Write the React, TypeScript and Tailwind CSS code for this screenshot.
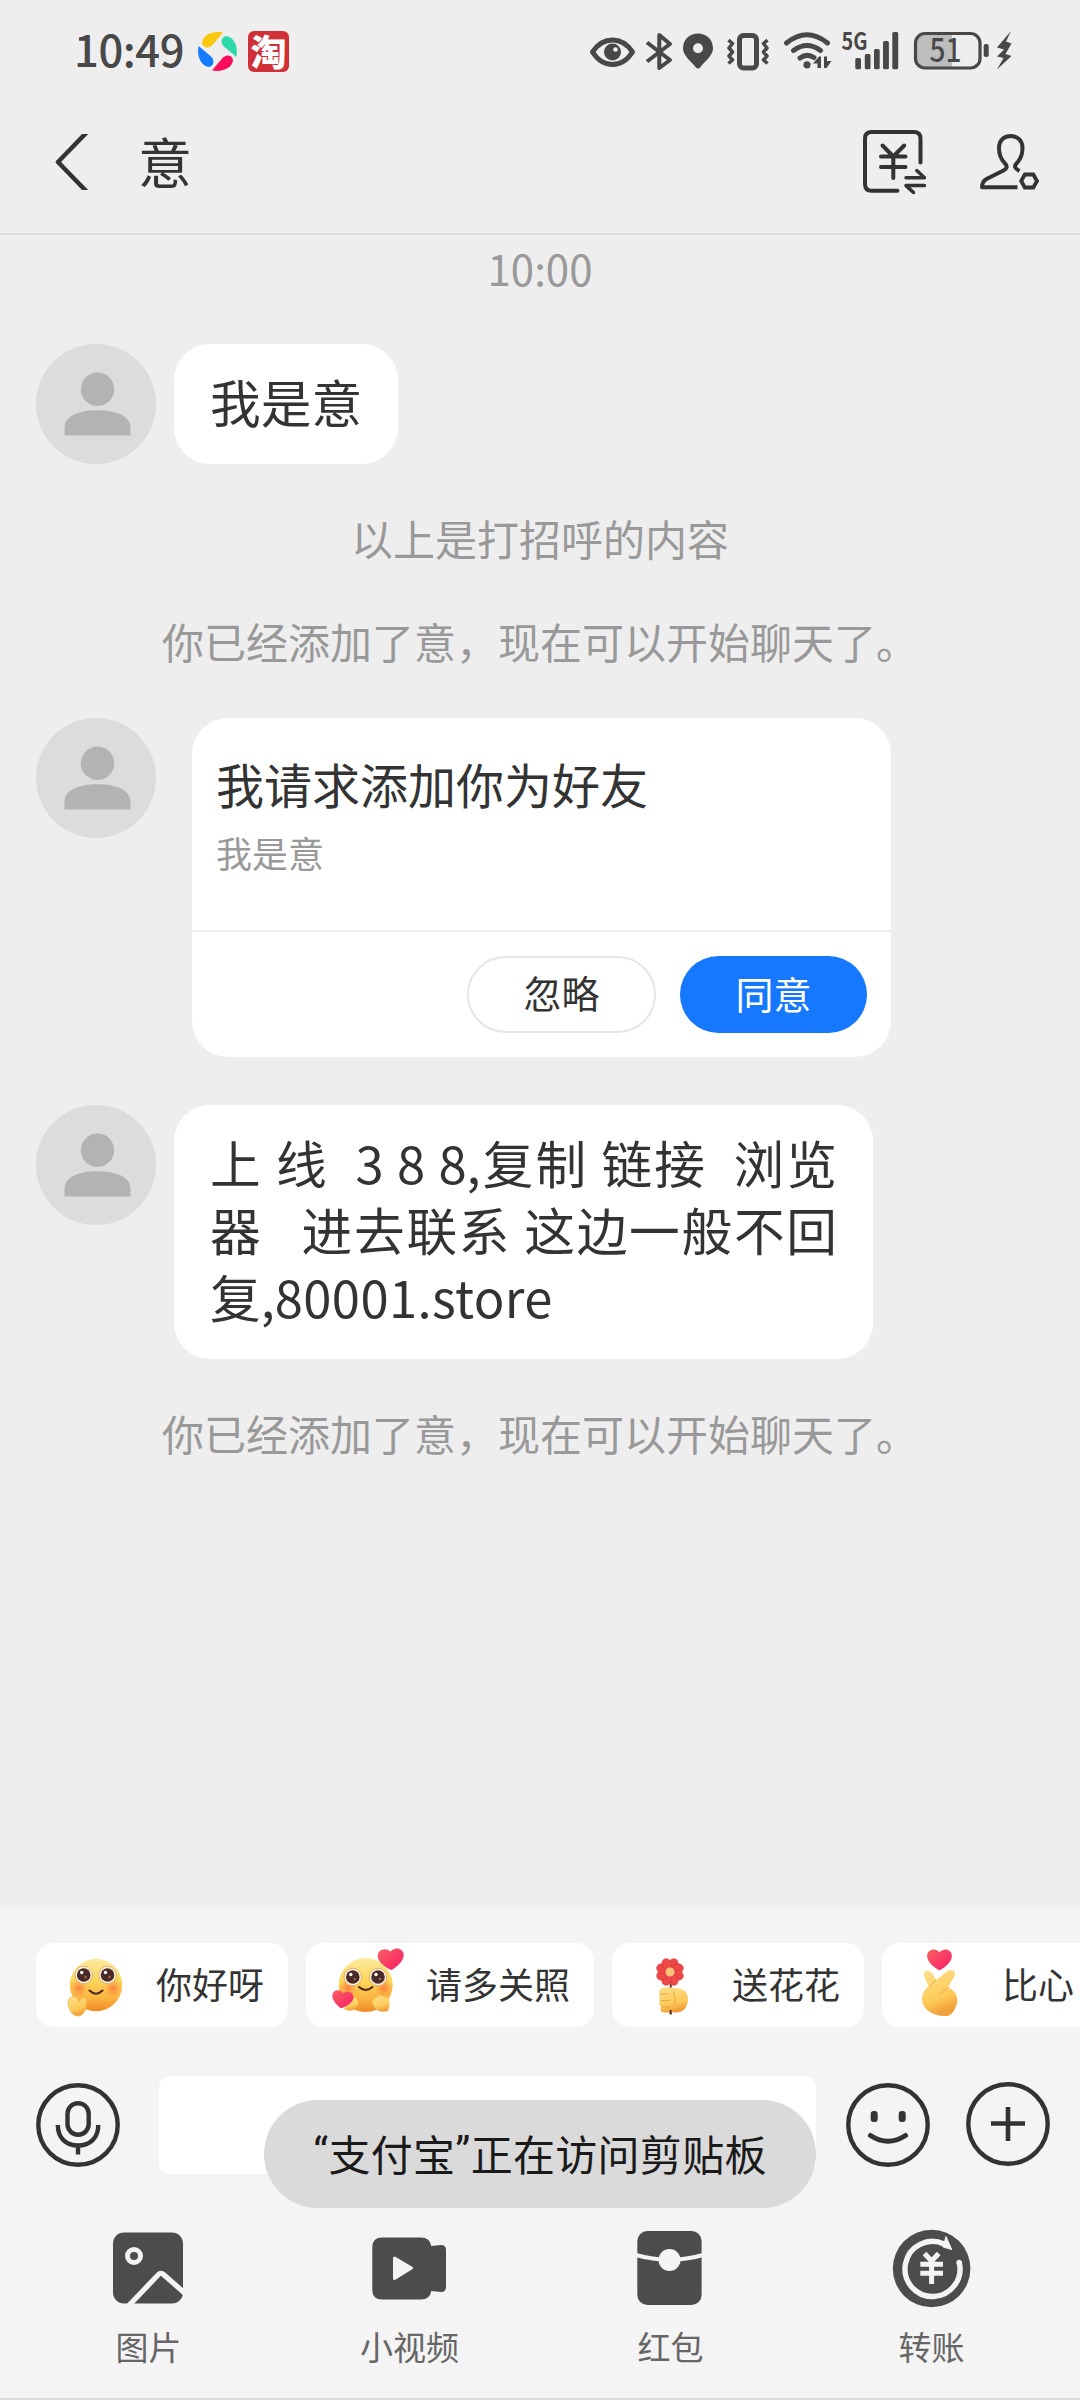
import type { ReactNode } from "react";

type ArtProps = { box: [number, number, number, number]; className?: string; children: ReactNode };

/* Icon canvas: box is [x, y, width, height] in screen units, drawn at 1:1. */
function Art({ box, className = "", children }: ArtProps) {
  return (
    <svg
      width={box[2]}
      height={box[3]}
      viewBox={box.join(" ")}
      fill="none"
      className={`block shrink-0 ${className}`}
    >
      {children}
    </svg>
  );
}

const PETAL = "M223 32.6C212 30.5 202.5 35.5 202 43C203 48.5 209.5 48.5 212.5 45Z";

function StatusBar() {
  return (
    <header className="flex h-24 items-start text-[#484848]">
      <div className="mt-[23px] ml-[74px] w-[113px] text-[43.5px] leading-[52px] font-medium tracking-[-0.4px]">10:49</div>
      <Art box={[197, 31, 41, 41]} className="mt-[31px] ml-[10px]">
        <path d={PETAL} fill="#fdc810" />
        <path d={PETAL} fill="#2ed8a8" transform="rotate(90 217.5 51.5)" />
        <path d={PETAL} fill="#fb0c5c" transform="rotate(180 217.5 51.5)" />
        <path d={PETAL} fill="#137cff" transform="rotate(270 217.5 51.5)" />
      </Art>
      <div className="mt-[31px] ml-[10px] flex size-[41px] items-center justify-center rounded-[6px] bg-[#d03038] text-[36px] leading-[36px] font-black text-white">
        <span className="-mt-[3px]">淘</span>
      </div>
      <div className="ml-auto flex pr-[68px]">
        <Art box={[589, 30, 48, 42]} className="mt-[30px]">
          <path
            d="M592.5 52Q600.5 40 612.5 40Q624.5 40 632.5 52Q624.5 64.5 612.5 64.5Q600.5 64.5 592.5 52Z"
            stroke="currentColor"
            strokeWidth="5"
            strokeLinejoin="round"
          />
          <circle cx="612.5" cy="52" r="8.5" fill="currentColor" />
          <circle cx="615.5" cy="49.5" r="2.3" fill="#eee" />
        </Art>
        <Art box={[645, 30, 29, 42]} className="mt-[30px] ml-2">
          <path d="M647 42.5L670 60L659.3 68V35L670 44L647 61.5" stroke="currentColor" strokeWidth="4" strokeLinejoin="round" />
        </Art>
        <Art box={[681, 30, 34, 42]} className="mt-[30px] ml-[7px]">
          <path
            d="M698 33.5C689 33.5 683 40 683 48.5C683 56 692 62 695.5 67Q698 70 700.5 67C704 62 713 56 713 48.5C713 40 707 33.5 698 33.5Z"
            fill="currentColor"
          />
          <circle cx="698" cy="48.3" r="5" fill="#eee" />
        </Art>
        <Art box={[725, 30, 46, 42]} className="mt-[30px] ml-[10px]">
          <rect x="739.5" y="35.5" width="17" height="32.5" rx="4" stroke="currentColor" strokeWidth="5" />
          <path
            d="M728.5 40L732.5 43.5L729 48L732.5 52L729 56L732.5 60L728.5 63.5M767.5 40L763.5 43.5L767 48L763.5 52L767 56L763.5 60L767.5 63.5"
            stroke="currentColor"
            strokeWidth="3.5"
            strokeLinejoin="round"
          />
        </Art>
        <Art box={[782, 30, 51, 42]} className="mt-[30px] ml-[11px]">
          <path
            d="M786.5 43Q807 26.5 827.5 43M793.5 50.5Q807 40.5 820.5 50.5M800 58Q807 53 814 57.5"
            stroke="currentColor"
            strokeWidth="5"
            strokeLinecap="round"
          />
          <circle cx="807" cy="64.8" r="3.6" fill="currentColor" />
          <path d="M821 56.5V68H817.5V63.5H813L819 56.5ZM824 56.5H827V61H831.5L826.5 68H824Z" fill="currentColor" />
        </Art>
        <Art box={[841, 18, 60, 66]} className="mt-[18px] ml-2">
          <text x="841.5" y="50" fontSize="24" fontWeight="700" textLength="26" lengthAdjust="spacingAndGlyphs" fill="currentColor">
            5G
          </text>
          <g fill="currentColor">
            <rect x="855.3" y="58" width="5.7" height="11.3" rx="1.5" />
            <rect x="864.8" y="54" width="5.7" height="15.3" rx="1.5" />
            <rect x="874" y="49" width="5.7" height="20.3" rx="1.5" />
            <rect x="883" y="41" width="5.9" height="28.3" rx="1.5" />
            <rect x="892.3" y="32" width="5.9" height="37.3" rx="1.5" />
          </g>
        </Art>
        <Art box={[912, 18, 100, 66]} className="mt-[18px] ml-[11px]">
          <path d="M926 34H952V68H926Q916 68 916 58V44Q916 34 926 34Z" fill="#bdbdbd" />
          <rect x="915.5" y="33.5" width="64.5" height="34.5" rx="9.5" stroke="currentColor" strokeWidth="3.2" />
          <text x="929.5" y="62.3" fontSize="32" fontWeight="500" textLength="32" lengthAdjust="spacingAndGlyphs" fill="currentColor">
            51
          </text>
          <rect x="983.7" y="44" width="5" height="13" rx="2" fill="currentColor" />
          <path
            d="M1011 31L997 47.5L1004 49.5L997 56.5L1003.5 58L997 69.5L1011.5 56L1005.5 54L1011.5 43.5L1006 41.5Z"
            fill="currentColor"
          />
        </Art>
      </div>
    </header>
  );
}

function TitleBar() {
  return (
    <nav className="flex h-[139px] items-start border-b-2 border-[#dcdcdc] text-[#333]">
      <Art box={[54, 134, 34, 56]} className="mt-[38px] ml-[54px]">
        <path d="M90 129L58 162L90 195" stroke="currentColor" strokeWidth="4.5" strokeLinejoin="round" />
      </Art>
      <h1 className="mt-[35px] ml-[50px] text-[54px] leading-[60px]">意</h1>
      <Art box={[860, 128, 68, 68]} className="mt-8 ml-auto">
        <g stroke="currentColor" strokeWidth="4" strokeLinecap="round" strokeLinejoin="round">
          <path d="M920.5 162.5V138.5Q920.5 132 914 132H871.5Q865 132 865 138.5V184Q865 190.7 871.5 190.7H897.5" />
          <path d="M882.5 145.5L893.3 156.5L904.2 145.5M881 156.5H905.5M881 167H905.5M893.3 156.5V178" />
          <path d="M906 177.7H924.5L916.8 170.5M924.5 185.6H906L913.5 192.5" strokeWidth="3.5" />
        </g>
      </Art>
      <Art box={[978, 130, 64, 64]} className="mt-[34px] mr-[38px] ml-[50px]">
        <path
          d="M1019.5 171Q1012.5 167.5 1016.5 163.5Q1022.5 157.5 1022.5 148C1022.5 140.5 1017.5 136 1010.7 136C1004 136 999 140.5 999 148Q999 157.5 1005 163.5Q1009 167.5 1003.5 170.5L986.5 179Q982 181.5 982 187.3H1017.5"
          stroke="currentColor"
          strokeWidth="4"
          strokeLinejoin="round"
        />
        <path d="M1024.8 174.5H1033.3L1037 181L1033.3 187.5H1024.8L1021.2 181Z" stroke="currentColor" strokeWidth="3.8" />
      </Art>
    </nav>
  );
}

function Avatar() {
  return (
    <Art box={[0, 0, 120, 120]} className="rounded-full bg-[#dcdcdc]">
      <circle cx="61.5" cy="45.3" r="16.7" fill="#b3b3b3" />
      <path d="M28.5 91.5V84C28.5 72 43 66.3 61.5 66.3S94.5 72 94.5 84V91.5Z" fill="#b3b3b3" />
    </Art>
  );
}

function Notice({ children, className }: { children: ReactNode; className: string }) {
  return <p className={`text-center text-[42px] leading-[60px] text-[#999] ${className}`}>{children}</p>;
}

function Chat() {
  return (
    <main className="flex h-[1672px] flex-col px-9">
      <Notice className="mt-[3px]">10:00</Notice>
      <div className="mt-[46px] flex h-[120px] gap-[18px]">
        <Avatar />
        <div className="rounded-[36px] bg-white px-9 pt-[24px] text-[50.7px] leading-[67px] text-[#333]">我是意</div>
      </div>
      <Notice className="mt-[44px]">以上是打招呼的内容</Notice>
      <Notice className="mt-[43px]">你已经添加了意，现在可以开始聊天了。</Notice>
      <div className="mt-[47px] flex h-[339px] gap-9">
        <Avatar />
        <section className="flex w-[699px] flex-col rounded-[36px] bg-white">
          <div className="h-[214px] border-b-2 border-[#ededed] px-6 pt-[35px]">
            <h2 className="text-[48px] leading-[60px] text-[#333]">我请求添加你为好友</h2>
            <p className="mt-[13px] text-[36px] leading-[52px] text-[#999]">我是意</p>
          </div>
          <div className="flex justify-end gap-6 px-6 pt-6 text-[38px] leading-none">
            <button className="h-[77px] w-[189px] rounded-full border-2 border-[#e6e6e6] pb-1.5 text-[#333]">忽略</button>
            <button className="h-[77px] w-[187px] rounded-full bg-[#1677ff] pb-1 text-white">同意</button>
          </div>
        </section>
      </div>
      <div className="mt-12 flex h-[254px] gap-[18px]">
        <Avatar />
        <p className="w-[699px] rounded-[36px] bg-white px-9 pt-[24px] text-justify text-[50.7px] leading-[67px] whitespace-pre-wrap text-[#333]">
          {"上 线  3 8 8,复制 链接  浏览器   进去联系 这边一般不回复,"}
          <span className="tracking-[0.4px]">80001.store</span>
        </p>
      </div>
      <Notice className="mt-[44px]">你已经添加了意，现在可以开始聊天了。</Notice>
    </main>
  );
}

function Gradients() {
  return (
    <svg className="absolute size-0" aria-hidden="true">
      <defs>
        <linearGradient id="face" x1="0" y1="0" x2="0" y2="1">
          <stop offset="0" stopColor="#fdeaa0" />
          <stop offset="0.4" stopColor="#fbd75c" />
          <stop offset="0.75" stopColor="#fcb440" />
          <stop offset="1" stopColor="#ee8a24" />
        </linearGradient>
        <radialGradient id="blush">
          <stop offset="0" stopColor="#fb6a3c" stopOpacity="0.75" />
          <stop offset="1" stopColor="#fb7a3c" stopOpacity="0" />
        </radialGradient>
        <linearGradient id="hand" x1="0" y1="0" x2="0.3" y2="1">
          <stop offset="0" stopColor="#fde08c" />
          <stop offset="0.7" stopColor="#fdca58" />
          <stop offset="1" stopColor="#f2a03a" />
        </linearGradient>
        <linearGradient id="love" x1="0" y1="0" x2="1" y2="1">
          <stop offset="0" stopColor="#fb5e62" />
          <stop offset="1" stopColor="#f81e68" />
        </linearGradient>
      </defs>
    </svg>
  );
}

function Eyes({ left, right, y }: { left: number; right: number; y: number }) {
  return (
    <>
      {[left, right].map((x) => (
        <g key={x}>
          <circle cx={x} cy={y} r="8.7" fill="#fff6e4" stroke="#d9a05a" strokeWidth="0.8" />
          <circle cx={x} cy={y} r="6.8" fill="#4a2a28" />
          <circle cx={x - 2} cy={y - 2.5} r="1.7" fill="#fff" />
          <circle cx={x + 2} cy={y + 2} r="1.2" fill="#a06a50" />
        </g>
      ))}
    </>
  );
}

const HEART = "M0 9.5C-4 8-13 1.500-13 -5C-13 -11.5-5 -14 0 -9C5 -14 13 -11.5 13 -5C13 1.500 4 8 0 9.5Z";

function HelloFace() {
  return (
    <Art box={[60, 1943, 72, 84]}>
      <circle cx="96" cy="1985" r="26.2" fill="url(#face)" />
      <circle cx="79" cy="1988" r="9" fill="url(#blush)" />
      <circle cx="113" cy="1988" r="9" fill="url(#blush)" />
      <Eyes left={83.7} right={107.5} y={1975} />
      <path d="M89.5 1990.5Q96 1997 102.5 1990.5" stroke="#4a2418" strokeWidth="2" strokeLinecap="round" />
      <path
        d="M68 2003C68 1999 70 1996.5 73 1997.5C75 1995.5 78 1997 79 2002C81 1997 85 1996.5 86 1999.5C87 2004 86.5 2014 79 2016C72 2016.5 69 2010 68 2003Z"
        fill="url(#hand)"
        stroke="#f2b04a"
        strokeWidth="0.7"
      />
    </Art>
  );
}

function HugFace() {
  return (
    <Art box={[330, 1943, 76, 84]}>
      <circle cx="365.7" cy="1985" r="27" fill="url(#face)" />
      <circle cx="348" cy="1988" r="9" fill="url(#blush)" />
      <circle cx="384" cy="1988" r="9" fill="url(#blush)" />
      <Eyes left={352.8} right={378} y={1977} />
      <path d="M359 1987Q365.7 1993 372.5 1987" stroke="#4a2418" strokeWidth="2" strokeLinecap="round" />
      <path d="M344 2009Q349 1998 356 1998Q361 2003 356 2008Q351 2013 344 2009Z" fill="url(#hand)" />
      <path d="M373 2000Q380 1993 388 1998Q391 2003 388 2011Q381 2013 377 2010Q371 2005 373 2000Z" fill="url(#hand)" />
      <path d={HEART} fill="url(#love)" transform="translate(391 1960.5) rotate(-3)" />
      <path d={HEART} fill="url(#love)" transform="translate(342.3 2000.5) rotate(8) scale(.82)" />
    </Art>
  );
}

function FlowerHand() {
  return (
    <Art box={[636, 1943, 72, 84]}>
      <path d="M670.7 1984V2014" stroke="#5c3a2c" strokeWidth="2" />
      {[22.5, 67.5, 112.5, 157.5, 202.5, 247.5, 292.5, 337.5].map((a) => (
        <ellipse key={a} cx="670" cy="1963.5" rx="4.8" ry="5.6" fill="#ee4848" stroke="#d63038" strokeWidth="0.5" transform={`rotate(${a} 670 1972)`} />
      ))}
      <circle cx="670" cy="1972" r="4.5" fill="#fbc27c" />
      <path
        d="M662 1988Q667 1986.5 674 1988Q688 1988 688 2000Q687 2011 678 2012.5H664Q659 2012 661 2007Q658 2004 660 2000Q658 1997 659.5 1994Q658.5 1989 662 1988Z"
        fill="url(#hand)"
      />
      <path d="M660.5 1994H669M661 2000.5H669M662 2007H669M673.5 1992Q677 2000 673.5 2006" stroke="#eba848" strokeWidth="1" strokeLinecap="round" />
      <path d="M670.7 2010V2014.5" stroke="#5c3a2c" strokeWidth="2" />
    </Art>
  );
}

function FingerHeart() {
  return (
    <Art box={[904, 1943, 72, 84]}>
      <path
        d="M924 1976C922.5 1970 930 1968.5 933 1975L936 1980L947 1971.5C952 1968 957.5 1972 954 1977L948 1987Q957 1991 957.5 2001Q955 2013 948 2016C935 2017 922 2010 922 1999C922 1993 925 1990 928.5 1986Z"
        fill="url(#hand)"
      />
      <path d="M936 1980L930 1986M948 1987Q944 1992 940 1994" stroke="#eba848" strokeWidth="1" strokeLinecap="round" />
      <path d={HEART} fill="url(#love)" transform="translate(939.5 1961) scale(.95 .98)" />
    </Art>
  );
}

function QuickReplies() {
  const chip = "flex h-[84px] shrink-0 items-center rounded-[18px] bg-white";
  const label = "-mt-1 whitespace-nowrap";
  return (
    <div className="flex gap-[18px] overflow-hidden pt-9 pl-9 text-[36px] leading-[52px] text-[#333]">
      <div className={`${chip} w-[252px] pl-6`}>
        <HelloFace />
        <span className={`${label} ml-6`}>你好呀</span>
      </div>
      <div className={`${chip} w-[288px] pl-6`}>
        <HugFace />
        <span className={`${label} ml-5`}>请多关照</span>
      </div>
      <div className={`${chip} w-[252px] pl-6`}>
        <FlowerHand />
        <span className={`${label} ml-6`}>送花花</span>
      </div>
      <div className={`${chip} w-[252px] pl-[22px]`}>
        <FingerHeart />
        <span className={`${label} ml-[26px]`}>比心</span>
      </div>
    </div>
  );
}

function Composer() {
  return (
    <div className="relative mt-[49px] flex h-[98px] items-start pl-9 text-[#333]">
      <Art box={[36, 2083, 84, 84]} className="mt-[7px]">
        <g stroke="currentColor" strokeWidth="4.4">
          <circle cx="78" cy="2125" r="39.7" />
          <rect x="67.5" y="2103.2" width="21.2" height="31.5" rx="10.6" />
          <path d="M57.8 2125C57.8 2138 66 2145.5 78 2145.5S98.3 2138 98.3 2125M78 2145.5V2154.5" />
        </g>
      </Art>
      <div className="ml-[39px] h-[98px] w-[657px] rounded-[12px] bg-white" />
      <Art box={[846, 2083, 84, 84]} className="mt-[7px] ml-[30px]">
        <circle cx="888" cy="2125" r="39.7" stroke="currentColor" strokeWidth="4.4" />
        <rect x="870.7" y="2111" width="7" height="11" rx="3" fill="currentColor" />
        <rect x="898.7" y="2111" width="7" height="11" rx="3" fill="currentColor" />
        <path d="M870.5 2135.5Q888 2147 905.5 2135.5" stroke="currentColor" strokeWidth="5" strokeLinecap="round" />
      </Art>
      <Art box={[966, 2082, 84, 84]} className="mt-1.5 ml-9">
        <circle cx="1008" cy="2124" r="39.7" stroke="currentColor" strokeWidth="4.4" />
        <path d="M991 2123.5H1025M1008 2107V2141" stroke="currentColor" strokeWidth="4.6" />
      </Art>
      <div className="absolute top-6 left-[264px] flex h-[108px] w-[552px] items-center justify-center rounded-full bg-[#dadada] pb-1 text-[42px] tracking-[0.3px] whitespace-nowrap text-[#1a1a1a]">
        <span className="font-[Roboto,sans-serif]">“</span>
        支付宝
        <span className="font-[Roboto,sans-serif]">”</span>
        正在访问剪贴板
      </div>
    </div>
  );
}

function Tool({ label, children }: { label: string; children: ReactNode }) {
  return (
    <div className="flex w-[261px] flex-col items-center">
      {children}
      <span className="mt-[18px] text-[33px] leading-[40px] text-[#666]">{label}</span>
    </div>
  );
}

function Tools() {
  return (
    <div className="mt-[53px] flex grow pl-[18px]">
      <Tool label="图片">
        <Art box={[108, 2227, 81, 81]}>
          <rect x="113" y="2232.5" width="70" height="71" rx="11" fill="#4c4c4c" />
          <circle cx="134" cy="2256" r="6.5" stroke="#f4f4f4" strokeWidth="5" />
          <path d="M126 2308.5L158.5 2274.5Q160.8 2272 163.5 2274.5L188 2296" stroke="#f4f4f4" strokeWidth="5.2" />
        </Art>
      </Tool>
      <Tool label="小视频">
        <Art box={[369, 2227, 81, 81]}>
          <path
            d="M382 2237.5H421Q430 2237.5 431.3 2246L441 2245Q446 2245 446 2250V2287Q446 2292 441 2292L431.3 2291Q430 2299.5 421 2299.5H382Q372.3 2299.5 372.3 2290V2247Q372.3 2237.5 382 2237.5Z"
            fill="#4c4c4c"
          />
          <path d="M394.5 2258L411.5 2268L394.5 2278.5Z" fill="#f4f4f4" stroke="#f4f4f4" strokeWidth="3" strokeLinejoin="round" />
        </Art>
      </Tool>
      <Tool label="红包">
        <Art box={[630, 2227, 81, 81]}>
          <rect x="637.3" y="2231" width="64.3" height="74" rx="10" fill="#4c4c4c" />
          <path d="M636 2255Q669.5 2264.5 703 2255" stroke="#f4f4f4" strokeWidth="4.2" />
          <circle cx="669.5" cy="2260" r="11" fill="#f4f4f4" />
        </Art>
      </Tool>
      <Tool label="转账">
        <Art box={[891, 2227, 81, 83]} className="-mb-0.5">
          <circle cx="931.6" cy="2268.5" r="38.8" fill="#4c4c4c" />
          <path d="M959.1 2262A27.5 27.5 0 1 1 944 2244" stroke="#f4f4f4" strokeWidth="5.4" />
          <circle cx="959.1" cy="2262.5" r="2.7" fill="#f4f4f4" />
          <path d="M946 2236.5L951.8 2249.5L943 2247Z" fill="#f4f4f4" stroke="#f4f4f4" strokeLinejoin="round" />
          <path d="M924.5 2253.5L931.6 2261L938.7 2253.5M920.3 2264.3H943M920.3 2273.3H943M931.6 2261V2284" stroke="#f4f4f4" strokeWidth="5" />
        </Art>
      </Tool>
    </div>
  );
}

export default function App() {
  return (
    <div
      lang="zh-CN"
      className="flex h-[2400px] w-[1080px] flex-col overflow-hidden bg-[#eee] font-['Noto_Sans_CJK_SC',sans-serif]"
    >
      <StatusBar />
      <TitleBar />
      <Chat />
      <footer className="relative flex h-[493px] flex-col border-b-2 border-[#dadada] bg-[#f4f4f4]">
        <Gradients />
        <QuickReplies />
        <Composer />
        <Tools />
      </footer>
    </div>
  );
}
